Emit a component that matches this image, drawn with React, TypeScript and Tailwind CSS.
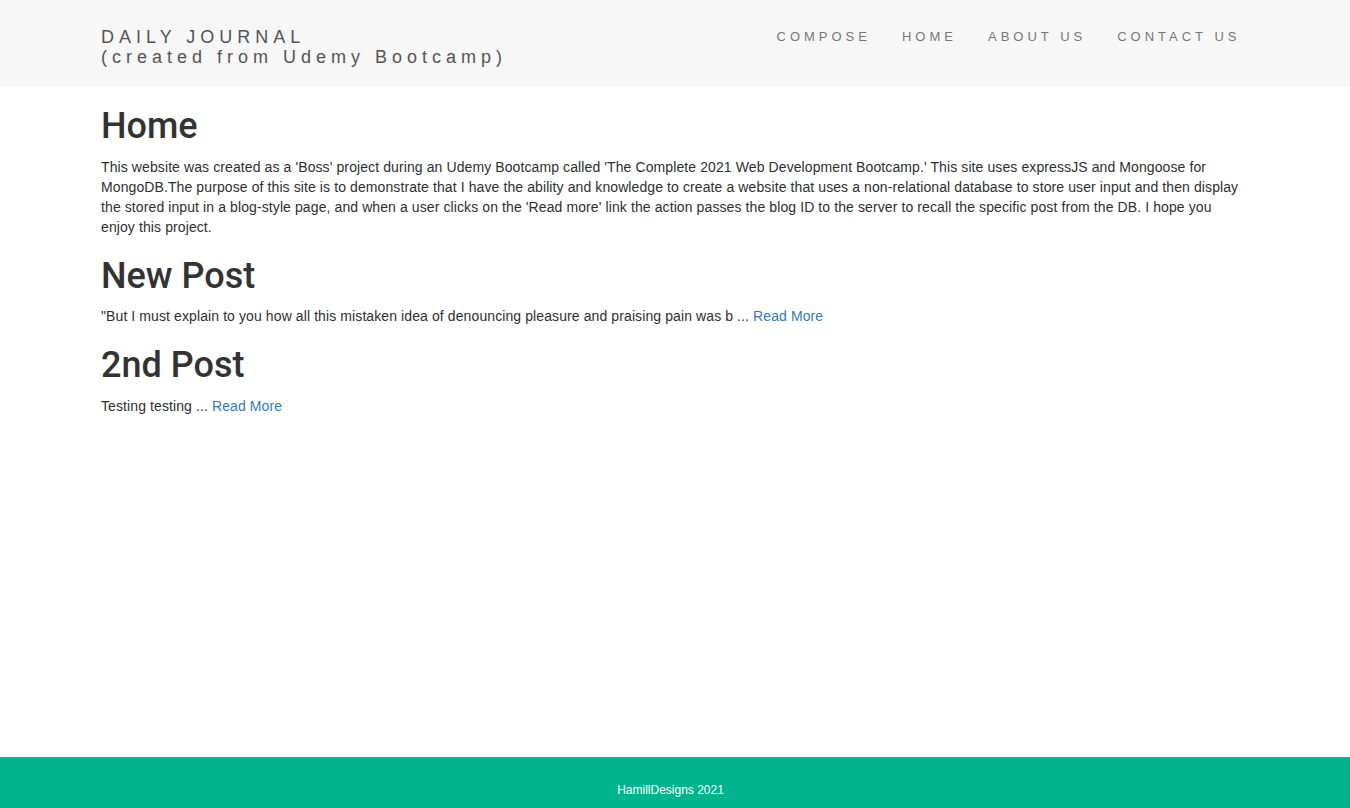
const posts = [
  {
    title: "New Post",
    excerpt:
      "\"But I must explain to you how all this mistaken idea of denouncing pleasure and praising pain was b",
  },
  {
    title: "2nd Post",
    excerpt: "Testing testing",
  },
];

const navLinks = ["COMPOSE", "HOME", "ABOUT US", "CONTACT US"];

export default function App() {
  return (
    <div className="min-h-screen flex flex-col bg-white text-[#2f2f2f] font-['Liberation_Sans',Arial,sans-serif] text-[14px] leading-[20px]">
      {/* navbar */}
      <nav className="bg-[#f7f7f7] h-[87px]">
        <div className="w-[1150px] mx-auto flex justify-between">
          <a href="#" className="pt-[27px] pl-[1px] text-[18px] leading-[20px] tracking-[5px] text-[#555]">
            DAILY JOURNAL
            <br />
            (created from Udemy Bootcamp)
          </a>
          <ul className="flex -mr-[6px] pt-[27px]">
            {navLinks.map((link) => (
              <li key={link}>
                <a href="#" className="block px-[15.5px] text-[13px] leading-[20px] tracking-[4px] text-[#777]">
                  {link}
                </a>
              </li>
            ))}
          </ul>
        </div>
      </nav>

      {/* content */}
      <main className="flex-1">
        <div className="w-[1150px] mx-auto pl-[1px]">
          <h1 className="mt-[20px] mb-[10px] text-[36px] leading-[39.6px] font-medium font-['Roboto',sans-serif] text-[#333]">
            Home
          </h1>
          <p className="mb-[10px] w-[1140px] tracking-[0.1px]">
            This website was created as a 'Boss' project during an Udemy Bootcamp called 'The Complete 2021 Web
            Development Bootcamp.' This site uses expressJS and Mongoose for MongoDB.The purpose of this site is to
            demonstrate that I have the ability and knowledge to create a website that uses a non-relational database
            to store user input and then display the stored input in a blog-style page, and when a user clicks on the
            'Read more' link the action passes the blog ID to the server to recall the specific post from the DB. I
            hope you enjoy this project.
          </p>
          {posts.map((post) => (
            <div key={post.title}>
              <h1 className="mt-[20px] mb-[10px] text-[36px] leading-[39.6px] font-medium font-['Roboto',sans-serif] text-[#333]">
                {post.title}
              </h1>
              <p className="mb-[10px] tracking-[0.1px]">
                {post.excerpt} ...{" "}
                <a href="#" className="text-[#337ab7]">
                  Read More
                </a>
              </p>
            </div>
          ))}
        </div>
      </main>

      {/* footer */}
      <footer className="h-[51px] bg-[#00b38f] text-white text-center text-[12px] leading-[14px] pt-[26px] pr-[9px]">
        HamillDesigns 2021
      </footer>
    </div>
  );
}
